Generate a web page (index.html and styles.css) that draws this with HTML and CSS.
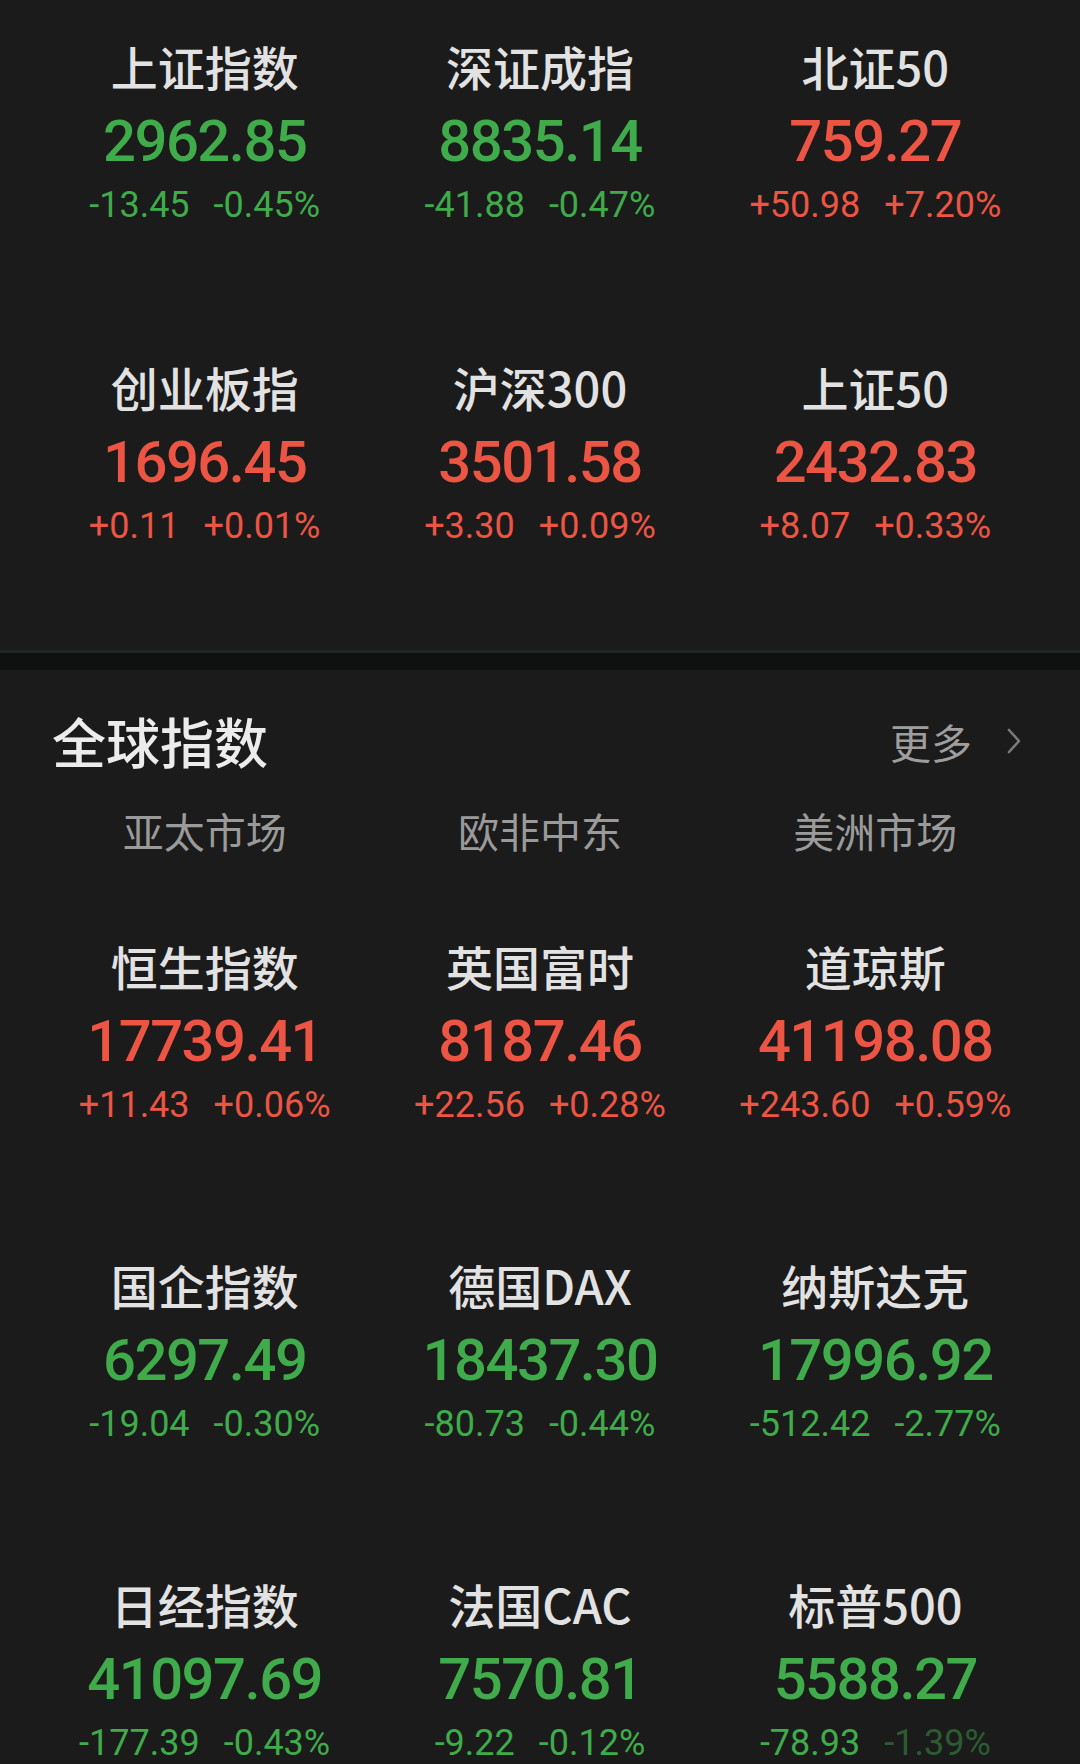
FILE: index.html
```html
<!DOCTYPE html>
<html lang="zh-CN">
<head>
<meta charset="utf-8">
<title>指数</title>
<link rel="stylesheet" href="styles.css">
</head>
<body>
<div class="page">
  <section class="domestic">
    <div class="grid">
      <div class="cell"><div class="name">上证指数</div><div class="value down">2962.85</div><div class="change down"><span>-13.45</span><span>-0.45%</span></div></div>
      <div class="cell"><div class="name">深证成指</div><div class="value down">8835.14</div><div class="change down"><span>-41.88</span><span>-0.47%</span></div></div>
      <div class="cell"><div class="name">北证50</div><div class="value up">759.27</div><div class="change up"><span>+50.98</span><span>+7.20%</span></div></div>
      <div class="cell"><div class="name">创业板指</div><div class="value up">1696.45</div><div class="change up"><span>+0.11</span><span>+0.01%</span></div></div>
      <div class="cell"><div class="name">沪深300</div><div class="value up">3501.58</div><div class="change up"><span>+3.30</span><span>+0.09%</span></div></div>
      <div class="cell"><div class="name">上证50</div><div class="value up">2432.83</div><div class="change up"><span>+8.07</span><span>+0.33%</span></div></div>
    </div>
  </section>
  <div class="divider"></div>
  <section class="global">
    <div class="header">
      <h2 class="title">全球指数</h2>
      <div class="more"><span>更多</span>
        <svg class="chev" width="16" height="26" viewBox="0 0 16 26"><path d="M3 2 L13 13 L3 24" fill="none" stroke="#7a7a7a" stroke-width="2.6" stroke-linecap="round" stroke-linejoin="round"/></svg>
      </div>
    </div>
    <div class="tabs">
      <div class="tab">亚太市场</div>
      <div class="tab">欧非中东</div>
      <div class="tab">美洲市场</div>
    </div>
    <div class="grid ggrid">
      <div class="cell"><div class="name">恒生指数</div><div class="value up">17739.41</div><div class="change up"><span>+11.43</span><span>+0.06%</span></div></div>
      <div class="cell"><div class="name">英国富时</div><div class="value up">8187.46</div><div class="change up"><span>+22.56</span><span>+0.28%</span></div></div>
      <div class="cell"><div class="name">道琼斯</div><div class="value up">41198.08</div><div class="change up"><span>+243.60</span><span>+0.59%</span></div></div>
      <div class="cell"><div class="name">国企指数</div><div class="value down">6297.49</div><div class="change down"><span>-19.04</span><span>-0.30%</span></div></div>
      <div class="cell"><div class="name">德国DAX</div><div class="value down">18437.30</div><div class="change down"><span>-80.73</span><span>-0.44%</span></div></div>
      <div class="cell"><div class="name">纳斯达克</div><div class="value down">17996.92</div><div class="change down"><span>-512.42</span><span>-2.77%</span></div></div>
      <div class="cell"><div class="name">日经指数</div><div class="value down">41097.69</div><div class="change down"><span>-177.39</span><span>-0.43%</span></div></div>
      <div class="cell"><div class="name">法国CAC</div><div class="value down">7570.81</div><div class="change down"><span>-9.22</span><span>-0.12%</span></div></div>
      <div class="cell"><div class="name">标普500</div><div class="value down">5588.27</div><div class="change down"><span>-78.93</span><span class="faded">-1.39%</span></div></div>
    </div>
  </section>
</div>
</body>
</html>
```

FILE: styles.css
```css
html, body {
  margin: 0;
  padding: 0;
  background: #1b1b1b;
}
body {
  width: 1080px;
  height: 1764px;
  overflow: hidden;
  font-family: "Noto Sans CJK SC", "Noto Sans", sans-serif;
  color: #e8e8e8;
}
.page {
  width: 1080px;
}
.domestic {
  height: 650px;
  box-sizing: border-box;
  padding-top: 42px;
}
.grid {
  display: grid;
  grid-template-columns: repeat(3, 1fr);
  column-gap: 20px;
  row-gap: 140px;
  padding: 0 47px;
}
.cell {
  display: flex;
  flex-direction: column;
  align-items: center;
}
.name {
  font-size: 47px;
  line-height: 47px;
  height: 47px;
  font-weight: 500;
  color: #e2e2e2;
  white-space: nowrap;
}
.value {
  margin-top: 23px;
  font-family: Roboto, "Noto Sans", sans-serif;
  font-weight: 500;
  font-size: 58px;
  line-height: 58px;
  height: 58px;
  letter-spacing: -1.5px;
  white-space: nowrap;
}
.change {
  margin-top: 17px;
  display: flex;
  gap: 24px;
  font-family: Roboto, "Noto Sans", sans-serif;
  font-weight: 400;
  font-size: 36px;
  line-height: 36px;
  height: 36px;
  white-space: nowrap;
}
.up { color: #ec5544; }
.down { color: #3fab4a; }
.faded { opacity: 0.45; }

.divider {
  height: 17px;
  background: #0f1111;
  border-top: 3px solid #212525;
}
.global {
  padding-top: 44px;
}
.header {
  display: flex;
  justify-content: space-between;
  align-items: center;
  padding: 0 58px 0 52px;
  height: 54px;
}
.title {
  margin: 0;
  font-size: 54px;
  line-height: 54px;
  font-weight: 500;
  color: #ececec;
}
.more {
  display: flex;
  align-items: center;
  gap: 34px;
  font-size: 41px;
  line-height: 41px;
  color: #9e9e9e;
}
.chev {
  display: block;
}
.tabs {
  display: grid;
  grid-template-columns: repeat(3, 1fr);
  column-gap: 20px;
  padding: 0 47px;
  margin-top: 42px;
}
.tab {
  text-align: center;
  font-size: 41px;
  line-height: 41px;
  color: #9a9a9a;
}
.ggrid {
  margin-top: 91px;
  row-gap: 138px;
}
```
